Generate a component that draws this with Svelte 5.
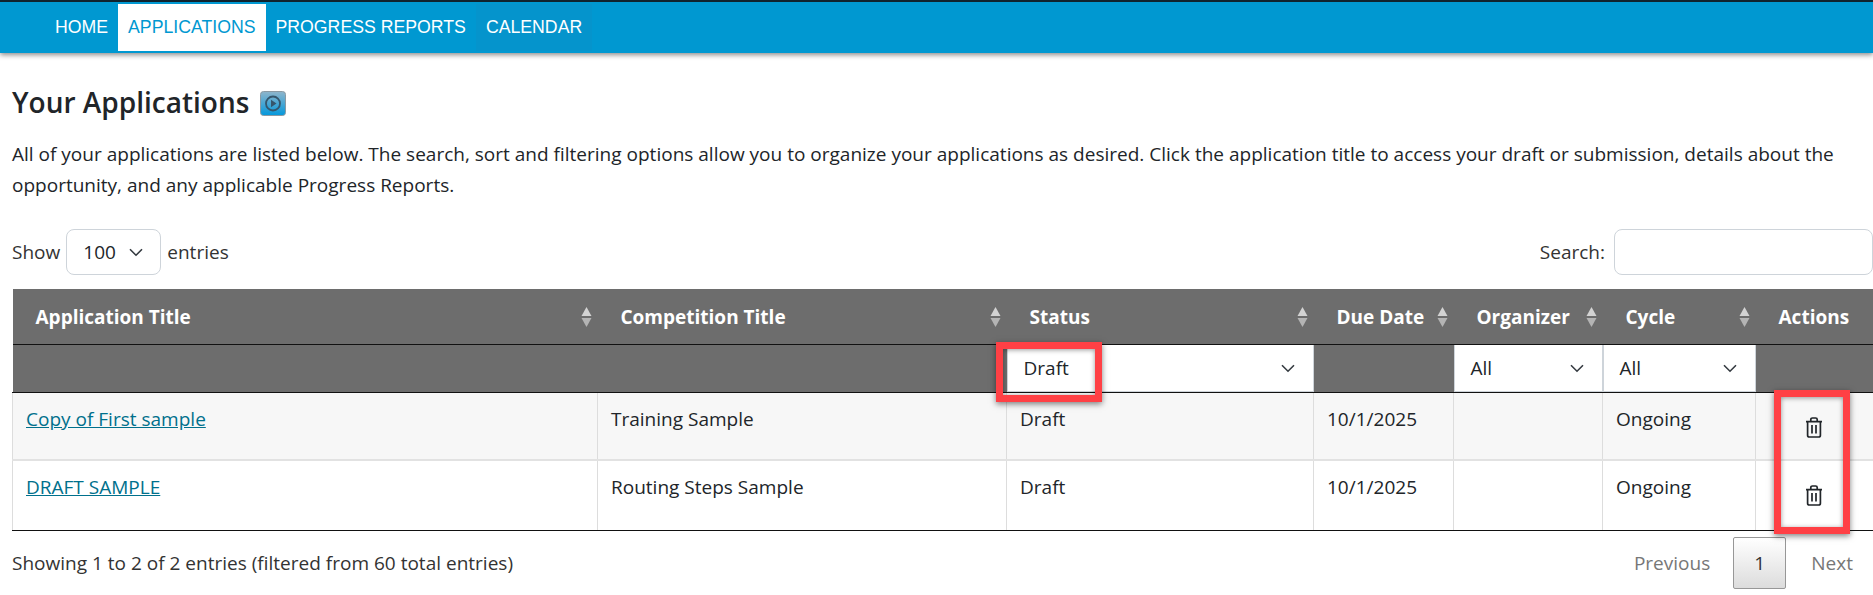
<script>
  const navItems = [
    { label: 'HOME', cls: 'home' },
    { label: 'APPLICATIONS', cls: 'active' },
    { label: 'PROGRESS REPORTS', cls: 'progress' },
    { label: 'CALENDAR', cls: 'calendar' }
  ];
  const rows = [
    { title: 'Copy of First sample', comp: 'Training Sample', status: 'Draft', due: '10/1/2025', org: '', cycle: 'Ongoing' },
    { title: 'DRAFT SAMPLE', comp: 'Routing Steps Sample', status: 'Draft', due: '10/1/2025', org: '', cycle: 'Ongoing' }
  ];
  const headers = [
    { label: 'Application Title', sort: true },
    { label: 'Competition Title', sort: true },
    { label: 'Status', sort: true },
    { label: 'Due Date', sort: true },
    { label: 'Organizer', sort: true },
    { label: 'Cycle', sort: true },
    { label: 'Actions', sort: false }
  ];
</script>

{#snippet chevron()}
  <svg class="chev" width="14" height="9" viewBox="0 0 14 9"><path d="M1 1.2 7 7.2 13 1.2" fill="none" stroke="#343a40" stroke-width="1.6" /></svg>
{/snippet}

{#snippet sorter()}
  <svg class="sorter" width="11" height="20" viewBox="0 0 11 20"><path d="M5.5 0 10.5 9H.5z" fill="#d3d3d3" /><path d="M5.5 20 .5 11h10z" fill="#b4b4b4" /></svg>
{/snippet}

{#snippet trash()}
  <svg width="18" height="21" viewBox="0 0 18 21" fill="none" stroke="#212529" stroke-width="1.7">
    <path d="M1 4.6h16M2.6 4.6v13.6a1.8 1.8 0 0 0 1.8 1.8h9.2a1.8 1.8 0 0 0 1.8-1.8V4.6M5.8 4.4V2.6A1.6 1.6 0 0 1 7.4 1h3.2a1.6 1.6 0 0 1 1.6 1.6v1.8M7 8v8.5M11 8v8.5" />
  </svg>
{/snippet}

<header class="topbar">
  <nav>
    {#each navItems as item}
      <a href="#/" class={item.cls}>{item.label}</a>
    {/each}
  </nav>
</header>

<main>
  <h1>Your Applications
    <span class="video">
      <svg width="26" height="25" viewBox="0 0 26 25">
        <defs><linearGradient id="vg" x1="0" y1="0" x2="0" y2="1"><stop offset="0" stop-color="#8fb5cb" /><stop offset="1" stop-color="#0398dc" /></linearGradient></defs>
        <rect x=".5" y=".5" width="25" height="24" rx="3" fill="url(#vg)" stroke="#8b9aa3" />
        <circle cx="13" cy="12.5" r="7" fill="none" stroke="#35566c" stroke-width="1.8" />
        <path d="M11 8.8 16.5 12.5 11 16.2z" fill="#35566c" />
      </svg>
    </span>
  </h1>
  <p class="intro">All of your applications are listed below. The search, sort and filtering options allow you to organize your applications as desired. Click the application title to access your draft or submission, details about the opportunity, and any applicable Progress Reports.</p>

  <div class="controls">
    <div class="length">
      <span>Show</span>
      <div class="box lenbox"><span class="val">100</span>{@render chevron()}</div>
      <span>entries</span>
    </div>
    <div class="search">
      <span>Search:</span>
      <input type="text" aria-label="Search" />
    </div>
  </div>

  <div class="tablewrap">
    <table>
      <colgroup>
        <col class="c1" /><col class="c2" /><col class="c3" /><col class="c4" /><col class="c5" /><col class="c6" /><col class="c7" />
      </colgroup>
      <thead>
        <tr class="heads">
          {#each headers as h}
            <th><div class="th"><span>{h.label}</span>{#if h.sort}{@render sorter()}{/if}</div></th>
          {/each}
        </tr>
        <tr class="filters">
          <td></td><td></td>
          <td><div class="filter status"><span>Draft</span>{@render chevron()}</div></td>
          <td></td>
          <td><div class="filter"><span>All</span>{@render chevron()}</div></td>
          <td><div class="filter"><span>All</span>{@render chevron()}</div></td>
          <td></td>
        </tr>
      </thead>
      <tbody>
        {#each rows as r, i}
          <tr class:odd={i === 0}>
            <td><a href="#/">{r.title}</a></td>
            <td>{r.comp}</td>
            <td>{r.status}</td>
            <td>{r.due}</td>
            <td>{r.org}</td>
            <td>{r.cycle}</td>
            <td class="act"><div class="trash">{@render trash()}</div></td>
          </tr>
        {/each}
      </tbody>
    </table>
    <div class="mark mark1"></div>
    <div class="mark mark2"></div>
  </div>

  <div class="foot">
    <span>Showing 1 to 2 of 2 entries (filtered from 60 total entries)</span>
    <div class="pager">
      <span class="off prev">Previous</span>
      <span class="cur">1</span>
      <span class="off next">Next</span>
    </div>
  </div>
</main>

<style>
  :global(body) { margin: 0; background: #fff; overflow: hidden; }
  :global(#app) { width: 1873px; height: 595px; overflow: hidden; font-family: "Open Sans", "Noto Sans", sans-serif; font-size: 19.03px; color: #212529; }

  .topbar {
    height: 51px;
    background: #0098d1;
    border-top: 2px solid #10232e;
    box-shadow: 0 2px 5px rgba(0, 0, 0, .45);
    position: relative;
  }
  nav { display: flex; padding: 2px 0 0 45px; height: 47px; }
  nav a {
    font-family: "Liberation Sans", Arial, sans-serif;
    font-size: 17.7px;
    color: #fff;
    text-decoration: none;
    display: flex;
    align-items: center;
    padding: 0 10px;
    height: 47px;
  }
  nav a.active { background: #fff; color: #0098d1; }
  nav a.calendar { background: #0594cc; }

  main { padding: 0 0 0 12px; }
  h1 {
    margin: 0;
    padding-top: 27px;
    font-size: 28px;
    font-weight: 600;
    line-height: 44px;
    display: flex;
    align-items: center;
    gap: 11px;
    height: 44px;
    color: #212529;
  }
  .video { display: flex; margin-top: 2px; }
  .intro { margin: 15px 0 0; line-height: 31px; width: 1840px; }

  .controls { display: flex; justify-content: space-between; align-items: center; margin-top: 28px; height: 46px; }
  .length, .search { display: flex; align-items: center; }
  .length { gap: 6px; color: #333; }
  .search { gap: 9px; color: #333; }
  .box, .search input {
    border: 1px solid #ced4da;
    border-radius: 8px;
    height: 46px;
    box-sizing: border-box;
    background: #fff;
  }
  .lenbox { width: 95px; display: flex; align-items: center; padding-left: 16px; gap: 13px; }
  .val { color: #212529; }
  .search input { width: 259px; margin: 0; padding: 0; outline: none; }

  .tablewrap { position: relative; margin-top: 14px; }
  table { border-collapse: collapse; table-layout: fixed; width: 1861px; }
  .c1 { width: 585px; }
  .c2 { width: 409px; }
  .c3 { width: 307px; }
  .c4 { width: 140px; }
  .c5 { width: 149px; }
  .c6 { width: 153px; }
  .c7 { width: 118px; }

  .heads { background: #6d6d6d; height: 55px; }
  .heads th { padding: 1px 0 0 23px; border-bottom: 1px solid #111; text-align: left; }
  .th { display: flex; justify-content: space-between; align-items: center; padding-right: 6px; color: #fff; font-weight: 700; font-size: 19px; }
  .sorter { flex: none; }

  .filters { background: #6d6d6d; height: 48px; }
  .filters td { padding: 0; border-bottom: 1px solid #111; }
  .filter {
    height: 47px;
    box-sizing: border-box;
    background: #fff;
    border: 1px solid #ced4da;
    border-top: 0;
    display: flex;
    align-items: center;
    justify-content: space-between;
    padding: 1px 18px 0 16px;
    color: #212529;
  }

  tbody td {
    height: 68px;
    padding: 13px 13px 0;
    box-sizing: border-box;
    vertical-align: top;
    line-height: 26px;
    border-left: 1px solid #ddd;
    border-bottom: 2px solid #e2e2e2;
    color: #212529;
  }
  tbody tr:last-child td { border-bottom: 1px solid #111; height: 70px; }
  tbody td:last-child { border-right: 1px solid #ddd; }
  tr.odd { background: #f7f7f7; }
  tbody a { color: #00708c; text-decoration: underline; }
  .trash { display: flex; justify-content: center; padding: 11px 2px 0 0; }
  .act { padding-left: 0; padding-right: 0; }

  .mark {
    position: absolute;
    box-sizing: border-box;
    border: 7px solid #ff4045;
    box-shadow: 0 2px 6px rgba(0, 0, 0, .5), inset 0 1px 5px rgba(0, 0, 0, .4);
    pointer-events: none;
  }
  .mark1 { left: 984px; top: 53px; width: 106px; height: 60px; }
  .mark2 { left: 1762px; top: 101px; width: 76px; height: 144px; }

  .foot { display: flex; justify-content: space-between; align-items: center; margin-top: 6px; height: 52px; color: #333; }
  .pager { display: flex; align-items: center; }
  .off { color: #777; }
  .prev { margin-right: 23px; }
  .next { margin-left: 25px; margin-right: 20px; }
  .cur {
    width: 53px; height: 52px;
    box-sizing: border-box;
    display: flex; align-items: center; justify-content: center;
    border: 1px solid #979797;
    border-radius: 2px;
    background: linear-gradient(#fff, #dcdcdc);
    color: #333;
  }
</style>
